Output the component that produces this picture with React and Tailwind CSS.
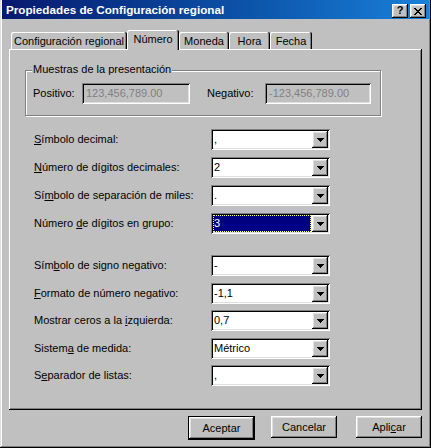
import React from 'react';

const raised =
  'shadow-[inset_-1px_-1px_0_#000,inset_1px_1px_0_#fff,inset_-2px_-2px_0_#808080,inset_2px_2px_0_#dfdfdf]';
const sunken =
  'shadow-[inset_1px_1px_0_#808080,inset_-1px_-1px_0_#fff,inset_2px_2px_0_#000,inset_-2px_-2px_0_#dfdfdf]';

const rows = [
  { label: <><u>S</u>ímbolo decimal:</>, value: ',', gap: 'mt-0' },
  { label: <><u>N</u>úmero de dígitos decimales:</>, value: '2', gap: 'mt-[7px]' },
  { label: <>Sí<u>m</u>bolo de separación de miles:</>, value: '.', gap: 'mt-[7px]' },
  { label: <>Número <u>d</u>e dígitos en grupo:</>, value: '3', gap: 'mt-[7px]', focused: true },
  { label: <>Sím<u>b</u>olo de signo negativo:</>, value: '-', gap: 'mt-[21px]' },
  { label: <><u>F</u>ormato de número negativo:</>, value: '-1,1', gap: 'mt-[7px]' },
  { label: <>Mostrar ceros a la <u>i</u>zquierda:</>, value: '0,7', gap: 'mt-[6px]' },
  { label: <>Sistem<u>a</u> de medida:</>, value: 'Métrico', gap: 'mt-[7px]' },
  { label: <>S<u>e</u>parador de listas:</>, value: ',', gap: 'mt-[6px]' },
];

const tabs = [
  { name: 'Configuración regional', w: 'w-[116px]' },
  { name: 'Número', w: 'w-[52px]', active: true },
  { name: 'Moneda', w: 'w-[50px]' },
  { name: 'Hora', w: 'w-[41px]' },
  { name: 'Fecha', w: 'w-[42px]' },
];

const Arrow = () => (
  <svg width="7" height="4" viewBox="0 0 7 4" shapeRendering="crispEdges">
    <path d="M0 0h7v1h-1v1h-1v1h-1v1h-1v-1h-1v-1h-1v-1h-1z" fill="#000" />
  </svg>
);

const Combo = ({ value, focused }) => (
  <div className={`flex h-[21px] w-[119px] bg-white p-[2px] ${sunken}`}>
    <div className="flex flex-1 items-stretch pr-px">
      {focused ? (
        <div className="flex flex-1 items-center bg-[#000080] pl-px text-white outline-1 outline-dotted -outline-offset-1 outline-[#ffff80]">
          {value}
        </div>
      ) : (
        <div className="flex flex-1 items-center pl-px">{value}</div>
      )}
    </div>
    <div className={`flex w-[16px] items-center justify-center bg-[#c0c0c0] ${raised}`}>
      <Arrow />
    </div>
  </div>
);

const Field = ({ value, w }) => (
  <div className={`flex h-[21px] ${w} items-center bg-[#c0c0c0] px-[4px] text-[#808080] ${sunken}`}>
    {value}
  </div>
);

const Button = ({ children, def, w }) => (
  <div className={def ? `border border-black ${w}` : w}>
    <div className={`flex h-[22px] items-center justify-center bg-[#c0c0c0] ${raised}`}>{children}</div>
  </div>
);

export default function App() {
  return (
    <div className="font-['Liberation_Sans',Arial,sans-serif] text-[11px] leading-none text-black">
      <div className="flex h-[448px] w-[431px] flex-col bg-[#c0c0c0] pb-[2px] pl-[2px] pr-[2px] shadow-[inset_-1px_-1px_0_#000,inset_1px_0_0_#dfdfdf,inset_-2px_-2px_0_#808080,inset_2px_0_0_#fff]">
        {/* title bar */}
        <div className="flex h-[19px] items-start bg-gradient-to-r from-[#08186e] to-[#1a80d8]">
          <div className="flex-1 pl-[4px] pt-[4px] text-[11.7px] font-bold text-white">
            Propiedades de Configuración regional
          </div>
          <div className="mr-[3px] mt-[4px] flex gap-[2px]">
            <div className={`flex h-[14px] w-[16px] items-center justify-center bg-[#c0c0c0] pb-px text-[11px] font-bold ${raised}`}>
              ?
            </div>
            <div className={`flex h-[14px] w-[16px] items-center justify-center bg-[#c0c0c0] ${raised}`}>
              <svg width="8" height="7" viewBox="0 0 8 7" shapeRendering="crispEdges">
                <path
                  d="M0 0h2v1h1v1h2v-1h1v-1h2v1h-1v1h-1v1h-1v1h1v1h1v1h1v1h-2v-1h-1v-1h-2v1h-1v1h-2v-1h1v-1h1v-1h1v-1h-1v-1h-1v-1h-1z"
                  fill="#000"
                />
              </svg>
            </div>
          </div>
        </div>

        <div className="ml-[7px] w-[413px]">
          {/* tabs */}
          <div className="mt-[10px] flex h-[20px] items-end pl-[2px]">
            {tabs.map((t) =>
              t.active ? (
                <div
                  key={t.name}
                  className={`relative z-10 -mb-px flex h-[20px] ${t.w} items-start justify-center rounded-tl-[2px] rounded-tr-[2px] bg-[#c0c0c0] pt-[4px] shadow-[inset_-1px_0_0_#000,inset_1px_1px_0_#fff,inset_-2px_0_0_#808080]`}
                >
                  {t.name}
                </div>
              ) : (
                <div
                  key={t.name}
                  className={`flex h-[17px] ${t.w} items-start justify-center rounded-tl-[2px] rounded-tr-[2px] bg-[#c0c0c0] pt-[4px] shadow-[inset_-1px_0_0_#000,inset_1px_1px_0_#fff,inset_-2px_0_0_#808080]`}
                >
                  {t.name}
                </div>
              )
            )}
          </div>

          {/* panel */}
          <div className="flex h-[361px] flex-col shadow-[inset_-1px_-1px_0_#000,inset_1px_1px_0_#fff,inset_-2px_-2px_0_#808080]">
            <div className="relative ml-[16px] mt-[21px] h-[46px] w-[356px] border border-[#808080] shadow-[1px_1px_0_#fff,inset_1px_1px_0_#fff]">
              <div className="absolute left-[6px] top-[-7px] bg-[#c0c0c0] px-px">Muestras de la presentación</div>
              <div className="mt-[12px] flex items-center">
                <div className="ml-[7px] w-[49px]">Positivo:</div>
                <Field value="123,456,789.00" w="w-[108px]" />
                <div className="ml-[17px] w-[58px]">Negativo:</div>
                <Field value="-123,456,789.00" w="w-[106px]" />
              </div>
            </div>

            <div className="mt-[13px] flex flex-col">
              {rows.map((r, i) => (
                <div key={i} className={`flex h-[21px] items-center ${r.gap}`}>
                  <div className="ml-[25px] w-[177px]">{r.label}</div>
                  <Combo value={r.value} focused={r.focused} />
                </div>
              ))}
            </div>
          </div>

          {/* buttons */}
          <div className="mt-[6px] flex justify-end">
            <Button def w="w-[67px]">Aceptar</Button>
            <div className="w-[16px]" />
            <Button w="w-[66px]">Cancelar</Button>
            <div className="w-[19px]" />
            <Button w="w-[66px]">
              <span>
                Apli<u>c</u>ar
              </span>
            </Button>
          </div>
        </div>
      </div>
    </div>
  );
}
